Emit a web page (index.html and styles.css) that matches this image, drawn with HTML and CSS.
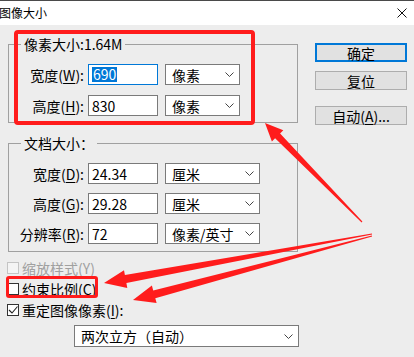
FILE: index.html
```html
<!DOCTYPE html>
<html lang="zh-CN">
<head>
  <meta charset="UTF-8">
  <meta name="viewport" content="width=device-width, initial-scale=1.0">
  <title>图像大小</title>
  <link rel="stylesheet" href="styles.css">
</head>
<body>
  <div class="window">
    <div class="titlebar">
      <span class="title">图像大小</span>
      <svg class="close" width="10" height="10" viewBox="0 0 10 10">
        <path d="M0.5 0.5 L9.5 9.5 M9.5 0.5 L0.5 9.5" stroke="#111" stroke-width="1" fill="none"/>
      </svg>
    </div>

    <div class="dialog">
      <div class="left">
        <fieldset class="group g-pixel">
          <legend>像素大小:1.64M</legend>
          <div class="rows">
            <div class="row">
              <label>宽度(<u>W</u>):</label>
              <div class="field focus"><span class="sel">690</span></div>
              <div class="select"><span>像素</span><svg class="chev" width="9" height="5" viewBox="0 0 9 5"><polyline points="0.5,0.5 4.5,4.5 8.5,0.5" fill="none" stroke="#444"/></svg></div>
            </div>
            <div class="row">
              <label>高度(<u>H</u>):</label>
              <div class="field">830</div>
              <div class="select"><span>像素</span><svg class="chev" width="9" height="5" viewBox="0 0 9 5"><polyline points="0.5,0.5 4.5,4.5 8.5,0.5" fill="none" stroke="#444"/></svg></div>
            </div>
          </div>
        </fieldset>

        <fieldset class="group g-doc">
          <legend>文档大小：</legend>
          <div class="rows">
            <div class="row">
              <label>宽度(<u>D</u>):</label>
              <div class="field">24.34</div>
              <div class="select"><span>厘米</span><svg class="chev" width="9" height="5" viewBox="0 0 9 5"><polyline points="0.5,0.5 4.5,4.5 8.5,0.5" fill="none" stroke="#444"/></svg></div>
            </div>
            <div class="row">
              <label>高度(<u>G</u>):</label>
              <div class="field">29.28</div>
              <div class="select"><span>厘米</span><svg class="chev" width="9" height="5" viewBox="0 0 9 5"><polyline points="0.5,0.5 4.5,4.5 8.5,0.5" fill="none" stroke="#444"/></svg></div>
            </div>
            <div class="row">
              <label>分辨率(<u>R</u>):</label>
              <div class="field">72</div>
              <div class="select"><span>像素/英寸</span><svg class="chev" width="9" height="5" viewBox="0 0 9 5"><polyline points="0.5,0.5 4.5,4.5 8.5,0.5" fill="none" stroke="#444"/></svg></div>
            </div>
          </div>
        </fieldset>

        <div class="checks">
          <div class="check disabled"><span class="box"></span>缩放样式(<u>Y</u>)</div>
          <div class="check"><span class="box"></span>约束比例(<u>C</u>)</div>
          <div class="check"><span class="box"><svg width="10" height="10" viewBox="0 0 10 10"><polyline points="1,5 4,8 9.5,1.5" fill="none" stroke="#222" stroke-width="1.1"/></svg></span>重定图像像素(<u>I</u>):</div>
        </div>

        <div class="select resample"><span>两次立方（自动）</span><svg class="chev" width="9" height="5" viewBox="0 0 9 5"><polyline points="0.5,0.5 4.5,4.5 8.5,0.5" fill="none" stroke="#444"/></svg></div>
      </div>

      <div class="buttons">
        <div class="btn default">确定</div>
        <div class="btn">复位</div>
        <div class="btn auto">自动(<u>A</u>)...</div>
      </div>
    </div>

    <div class="mark mark-pixel"></div>
    <div class="mark mark-ratio"></div>

    <svg class="arrows" width="414" height="357" viewBox="0 0 414 357">
      <polygon points="362.4,221.6 280.1,133.4 283.3,130.3 265,123 271.9,141.5 275.1,138.3 361.6,222.4"/>
      <polygon points="372.1,234.5 126.4,283 127.3,287.9 104,283 124,270.2 124.9,275.1 371.9,233.5"/>
      <polygon points="372.1,236.5 155.3,298.2 156.6,303 133,300 151.9,285.6 153.2,290.4 371.9,235.5"/>
    </svg>
  </div>
</body>
</html>
```

FILE: styles.css
```css
body {
  margin: 0;
  font-family: "Noto Sans CJK SC", "Microsoft YaHei", sans-serif;
  font-size: 14px;
  color: #000;
  background: #ededed;
}
u {
  text-underline-offset: 2px;
}
.window {
  position: relative;
  width: 414px;
  height: 357px;
  overflow: hidden;
  background: #ededed;
}
.titlebar {
  height: 24px;
  border-top: 1px solid #4a4a4a;
  background: #fff;
  display: flex;
  align-items: center;
  justify-content: space-between;
}
.title {
  font-size: 12px;
  line-height: 14px;
  margin-left: -1px;
}
.close {
  margin-right: 7px;
}
.dialog {
  display: flex;
  gap: 17px;
  padding: 10px 0 0 8px;
}
.left {
  width: 290px;
}
.group {
  margin: 0;
  min-width: 0;
  padding: 11px 0 6px;
  border: 1px solid #a0a0a0;
}
.group legend {
  margin-left: 12px;
  padding: 0 3px;
  line-height: 18px;
}
.g-doc {
  margin-top: 11px;
  padding-bottom: 7px;
}
.rows {
  display: flex;
  flex-direction: column;
  gap: 10px;
}
.g-doc .rows {
  gap: 9px;
}
.row {
  display: flex;
  align-items: center;
  height: 21px;
}
.row label {
  width: 75px;
  margin-right: 4px;
  text-align: right;
  line-height: 18px;
}
.field {
  box-sizing: border-box;
  width: 70px;
  height: 21px;
  margin-right: 7px;
  padding-left: 3px;
  border: 1px solid #7a7a7a;
  background: #fff;
  display: flex;
  align-items: center;
  line-height: 16px;
}
.field.focus {
  border-color: #0078d7;
}
.sel {
  background: #0078d7;
  color: #fff;
  line-height: 15px;
  padding: 0 1px;
}
.select {
  box-sizing: border-box;
  width: 75px;
  height: 21px;
  padding: 0 5px 0 6px;
  border: 1px solid #7a7a7a;
  background: #fff;
  display: flex;
  align-items: center;
  justify-content: space-between;
  line-height: 16px;
}
.g-doc .select {
  width: 95px;
}
.checks {
  margin-top: 5px;
}
.check {
  display: flex;
  align-items: center;
  height: 21px;
  line-height: 18px;
}
.check .box {
  box-sizing: border-box;
  width: 12px;
  height: 12px;
  margin: 0 3px 0 -1px;
  border: 1px solid #333;
  background: #fff;
  display: flex;
  align-items: center;
  justify-content: center;
}
.check.disabled {
  color: #a0a0a0;
}
.check.disabled .box {
  border-color: #c4c4c4;
  background: #f4f4f4;
}
.resample {
  width: 225px;
  height: 22px;
  margin: 5px 0 0 66px;
}
.buttons {
  width: 92px;
  padding-top: 8px;
  display: flex;
  flex-direction: column;
  gap: 9px;
}
.btn {
  box-sizing: border-box;
  height: 19px;
  border: 1px solid #adadad;
  background: #e1e1e1;
  display: flex;
  align-items: center;
  justify-content: center;
  line-height: 16px;
}
.btn.default {
  border: 2px solid #0078d7;
}
.btn.auto {
  margin-top: 7px;
}
.mark {
  position: absolute;
  box-sizing: border-box;
  border: 4px solid #ff1c1c;
  border-radius: 4px;
}
.mark-pixel {
  left: 14px;
  top: 30px;
  width: 241px;
  height: 95px;
}
.mark-ratio {
  left: 6px;
  top: 276px;
  width: 92px;
  height: 22px;
  border-width: 3px;
  border-radius: 3px;
}
.arrows {
  position: absolute;
  left: 0;
  top: 0;
  pointer-events: none;
}
.arrows polygon {
  fill: #ff1c1c;
}
```
